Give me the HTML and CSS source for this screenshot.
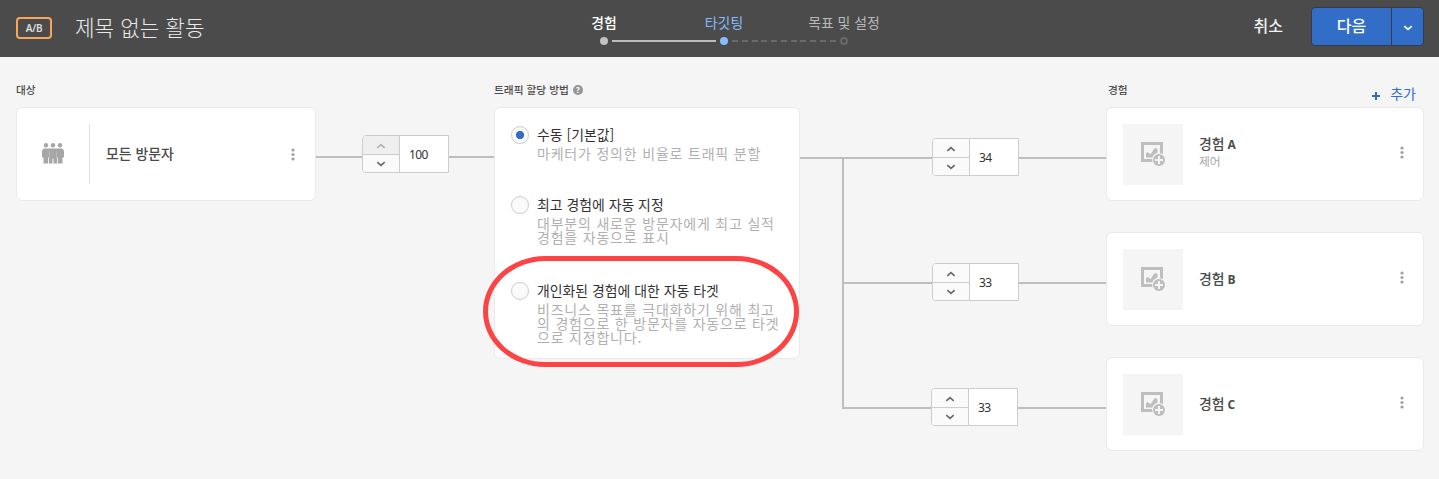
FILE: index.html
```
<!DOCTYPE html>
<html lang="ko">
<head>
<meta charset="utf-8">
<title>제목 없는 활동</title>
<link rel="stylesheet" href="styles.css">
</head>
<body>
<svg class="defs" width="0" height="0">
  <symbol id="up" viewBox="0 0 10 6"><path d="M1.300 4.800 5 1.600l3.700 3.200" fill="none" stroke="currentColor" stroke-width="1.7"/></symbol>
  <symbol id="down" viewBox="0 0 10 6"><path d="M1.300 1.200 5 4.400l3.700-3.200" fill="none" stroke="currentColor" stroke-width="1.7"/></symbol>
  <symbol id="more" viewBox="0 0 4 13"><g fill="currentColor"><circle cx="2" cy="2" r="1.6"/><circle cx="2" cy="6.500" r="1.600"/><circle cx="2" cy="11" r="1.600"/></g></symbol>
  <symbol id="image-add" viewBox="0 0 24 24">
    <path d="M0 0h22v12a7 7 0 0 0-3-.8V3H3v14h8.200a7 7 0 0 0 .4 3H0z" fill="currentColor"/>
    <path d="M5 15.500v-4l1.500-1.500 3 2.300L13 7l1.500-1 2 1v3.800a7.500 7.500 0 0 0-5.200 4.700z" fill="currentColor"/>
    <circle cx="18" cy="18" r="6" fill="currentColor"/>
    <path d="M18 14v8M14 18h8" stroke="#f5f5f5" stroke-width="2"/>
  </symbol>
</svg>

<header class="topbar">
  <span class="badge">A/B</span>
  <h1 class="title">제목 없는 활동</h1>
  <nav class="steps">
    <div class="step done"><span>경험</span><i class="dot"></i></div>
    <i class="bar"></i>
    <div class="step current"><span>타깃팅</span><i class="dot"></i></div>
    <i class="bar dashed"></i>
    <div class="step todo"><span>목표 및 설정</span><i class="dot"></i></div>
  </nav>
  <div class="actions">
    <button class="cancel">취소</button>
    <div class="split">
      <button class="next">다음</button>
      <button class="menu"><svg width="10" height="6"><use href="#down"/></svg></button>
    </div>
  </div>
</header>

<main class="flow">
  <section class="audience">
    <h2 class="label">대상</h2>
    <div class="card audience-card">
      <svg class="people" width="22" height="21" viewBox="0 0 22 21" fill="#a6a6a6">
        <circle cx="4" cy="2.300" r="2.200"/><circle cx="11" cy="2.300" r="2.200"/><circle cx="18" cy="2.300" r="2.200"/>
        <path d="M2 5.500h18q2 1 2 3v6h-1.500v6H16v-6h-.8v6h-3.700v-5h-1v5H6.800v-6H6v6H1.500v-6H0v-6q0-2 2-3z"/>
        <path d="M7.400 8v7M14.600 8v7" stroke="#c4c4c4" stroke-width=".7"/>
      </svg>
      <span class="name">모든 방문자</span>
      <svg class="more" width="4" height="13"><use href="#more"/></svg>
    </div>
  </section>

  <div class="link single">
    <i class="line"></i>
    <div class="stepper">
      <div class="arrows"><button class="off"><svg width="10" height="6"><use href="#up"/></svg></button><button><svg width="10" height="6"><use href="#down"/></svg></button></div>
      <span class="value">100</span>
    </div>
    <i class="line"></i>
  </div>

  <section class="method">
    <h2 class="label">트래픽 할당 방법
      <span class="help">?</span>
    </h2>
    <div class="card options">
      <div class="option">
        <i class="radio on"></i>
        <div><p class="option-title">수동 [기본값]</p><p class="option-text">마케터가 정의한 비율로 트래픽 분할</p></div>
      </div>
      <div class="option">
        <i class="radio"></i>
        <div><p class="option-title">최고 경험에 자동 지정</p><p class="option-text">대부분의 새로운 방문자에게 최고 실적<br>경험을 자동으로 표시</p></div>
      </div>
      <div class="option">
        <i class="radio"></i>
        <div><p class="option-title">개인화된 경험에 대한 자동 타겟</p><p class="option-text">비즈니스 목표를 극대화하기 위해 최고<br>의 경험으로 한 방문자를 자동으로 타겟<br>으로 지정합니다.</p></div>
      </div>
      <div class="highlight"></div>
    </div>
  </section>

  <div class="trunk"></div>

  <div class="branches">
    <div class="link">
      <i class="line"></i>
      <div class="stepper">
        <div class="arrows"><button><svg width="10" height="6"><use href="#up"/></svg></button><button><svg width="10" height="6"><use href="#down"/></svg></button></div>
        <span class="value">34</span>
      </div>
      <i class="line"></i>
    </div>
    <div class="link">
      <i class="line"></i>
      <div class="stepper">
        <div class="arrows"><button><svg width="10" height="6"><use href="#up"/></svg></button><button><svg width="10" height="6"><use href="#down"/></svg></button></div>
        <span class="value">33</span>
      </div>
      <i class="line"></i>
    </div>
    <div class="link last">
      <i class="line"></i>
      <div class="stepper">
        <div class="arrows"><button><svg width="10" height="6"><use href="#up"/></svg></button><button><svg width="10" height="6"><use href="#down"/></svg></button></div>
        <span class="value">33</span>
      </div>
      <i class="line"></i>
    </div>
  </div>

  <section class="experiences">
    <div class="heading">
      <h2 class="label">경험</h2>
      <a class="add"><svg width="8" height="8" viewBox="0 0 8 8"><path d="M4 0v8M0 4h8" stroke="currentColor" stroke-width="2"/></svg><span>추가</span></a>
    </div>
    <div class="card experience">
      <div class="thumb"><svg width="24" height="24"><use href="#image-add"/></svg></div>
      <div class="info with-sub"><span class="name">경험 <b>A</b></span><span class="sub">제어</span></div>
      <svg class="more" width="4" height="13"><use href="#more"/></svg>
    </div>
    <div class="card experience">
      <div class="thumb"><svg width="24" height="24"><use href="#image-add"/></svg></div>
      <div class="info"><span class="name">경험 <b>B</b></span></div>
      <svg class="more" width="4" height="13"><use href="#more"/></svg>
    </div>
    <div class="card experience">
      <div class="thumb"><svg width="24" height="24"><use href="#image-add"/></svg></div>
      <div class="info"><span class="name">경험 <b>C</b></span></div>
      <svg class="more" width="4" height="13"><use href="#more"/></svg>
    </div>
  </section>
</main>
</body>
</html>
```
FILE: styles.css
```
* { box-sizing: border-box; margin: 0; padding: 0; }
body {
  width: 1439px; height: 479px; overflow: hidden;
  background: #f5f5f5; color: #323232;
  font: 14px/20px "Noto Sans CJK KR", sans-serif;
}
i { display: block; flex: none; }
svg { display: block; flex: none; }
button { border: 0; background: none; font: inherit; color: inherit; }
.defs { position: absolute; }

.topbar { display: flex; height: 57px; background: #4b4b4b; padding: 0 15px 0 16px; }
.badge {
  width: 36px; height: 22px; margin-top: 17px; border: 2px solid #f7a55a; border-radius: 4px;
  color: #dcdcdc; font: 600 10px/18px "Noto Sans", sans-serif; letter-spacing: -.3px; text-align: center;
}
.title { margin: 12px 0 0 23px; width: 480px; font-size: 21.300px; line-height: 30px; font-weight: 300; color: #eaeaea; white-space: nowrap; }
.steps { display: flex; margin-left: 43px; }
.step { width: 12px; display: flex; flex-direction: column; align-items: center; padding-top: 12px; }
.step span { white-space: nowrap; font-size: 13.900px; line-height: 20px; height: 24px; }
.dot { width: 8px; height: 8px; margin-top: 1px; border-radius: 50%; background: currentColor; }
.done { color: #c2c2c2; }
.done span { color: #fff; font-weight: 500; }
.current { color: #86bdfc; }
.todo { color: #696969; }
.todo span { color: #b9b9b9; }
.todo .dot { background: none; border: 2px solid #696969; }
.bar { width: 104px; height: 2px; margin: 40px 2px 0; background: #bdbdbd; }
.bar.dashed { background: repeating-linear-gradient(90deg, #696969 0 6px, transparent 6px 9.780px); }
.actions { display: flex; margin-left: auto; padding-top: 7px; color: #fff; font-size: 16px; font-weight: 500; }
.cancel { height: 36px; margin-right: 28px; color: #f0f0f0; }
.split { display: flex; width: 113px; height: 39px; border: 1px solid #323c4b; border-radius: 4px; background: #326ec8; }
.next { width: 79px; padding-bottom: 3px; }
.menu { width: 32px; display: flex; align-items: center; justify-content: center; border-left: 1px solid #323c4b; padding-top: 3px; }

.flow { display: flex; padding: 24px 15px 0 16px; }
.label { height: 26px; font-size: 10.700px; line-height: 18px; font-weight: 500; color: #4b4b4b; white-space: nowrap; }
.card { border: 1px solid #eaeaea; border-radius: 6px; background: #fff; }
.audience { width: 300px; }
.audience-card { height: 94px; display: flex; align-items: center; padding: 0 20px 0 25px; }
.people { margin-top: -2px; margin-right: 25px; }
.audience-card .name { height: 60px; border-left: 1px solid #e1e1e1; padding-left: 16px; line-height: 59px; font-weight: 500; }
.more { margin-left: auto; color: #a0a0a0; }
.name { font-size: 13.900px; color: #4b4b4b; font-weight: 500; }
.name b { margin-left: -1px; font: 700 12px/20px "Open Sans", sans-serif; }

.link { display: flex; align-items: flex-start; height: 94px; padding-top: 31px; }
.line { height: 2px; flex: 1; margin-top: 19px; background: #bebebe; }
.link .line:first-child { flex: 0 0 88px; }
.link.last .line:first-child { flex-basis: 87px; }
.single { width: 178px; height: auto; padding-top: 54px; }
.single .line { margin-top: 21px; }
.link.single .line:first-child { flex-basis: 46px; }
.stepper { display: flex; width: 87px; height: 38px; border: 1px solid #cdcdcd; border-radius: 4px 0 0 4px; background: #fff; overflow: hidden; }
.arrows { width: 37px; border-right: 1px solid #cdcdcd; background: #fafafa; color: #6a6a6a; }
.arrows button { display: flex; width: 100%; height: 18px; align-items: center; justify-content: center; }
.arrows button:first-child { height: 19px; border-bottom: 1px solid #cdcdcd; padding-top: 2px; }
.arrows .off { background: #efefef; color: #b4b4b4; }
.value { padding-left: 9px; font: 12px/37px "Noto Sans", sans-serif; letter-spacing: -.6px; }

.method { width: 306px; }
.method .label { display: flex; }
.help { width: 10px; height: 10px; margin: 4px 0 0 4px; border-radius: 50%; background: #969696; color: #fff; font: 700 8px/10px "Open Sans", sans-serif; text-align: center; }
.options { position: relative; height: 252px; padding: 17px 0 0 16px; }
.option { display: flex; height: 70px; }
.option:nth-child(2) { height: 86px; }
.radio { width: 18px; height: 18px; margin: 1px 8px 0 0; border: 1px solid #cdcdcd; border-radius: 50%; background: #fafafa; }
.radio.on { background: radial-gradient(circle, #326ec8 0 3.700px, #fafafa 4.500px); }
.option p { white-space: nowrap; }
.option-title { margin-top: -1px; font-size: 13.900px; line-height: 20px; height: 22px; }
.option-text { font-size: 14px; letter-spacing: .8px; line-height: 14px; color: #b0b0b0; }
.highlight { position: absolute; left: -12px; top: 148px; width: 316px; height: 111px; border: 5px solid #fd4343; border-radius: 63px / 56px; }

.trunk { width: 44px; height: 252px; margin-top: 76px; border: solid #bebebe; border-width: 2px 2px 0 0; }
.branches { width: 262px; padding-top: 26px; display: flex; flex-direction: column; gap: 31px; }

.experiences { width: 318px; display: flex; flex-direction: column; }
.heading { display: flex; justify-content: space-between; height: 26px; padding: 0 8px 0 2px; }
.add { display: flex; gap: 10px; color: #326ec8; font-size: 14px; line-height: 24px; }
.add svg { margin-top: 11px; }
.experience { height: 94px; margin-bottom: 31px; display: flex; align-items: center; padding: 0 19px 0 16px; }
.thumb { width: 60px; height: 61px; background: #f5f5f5; display: flex; align-items: center; justify-content: center; color: #bebebe; }
.info { margin: -2px 0 0 16px; display: flex; flex-direction: column; }
.info.with-sub { margin-top: -8px; }
.info .name { height: 20px; line-height: 20px; }
.sub { margin-top: 1px; font-size: 11.800px; line-height: 14px; color: #a8a8a8; }
.experience .more { margin-top: -3px; }
```
